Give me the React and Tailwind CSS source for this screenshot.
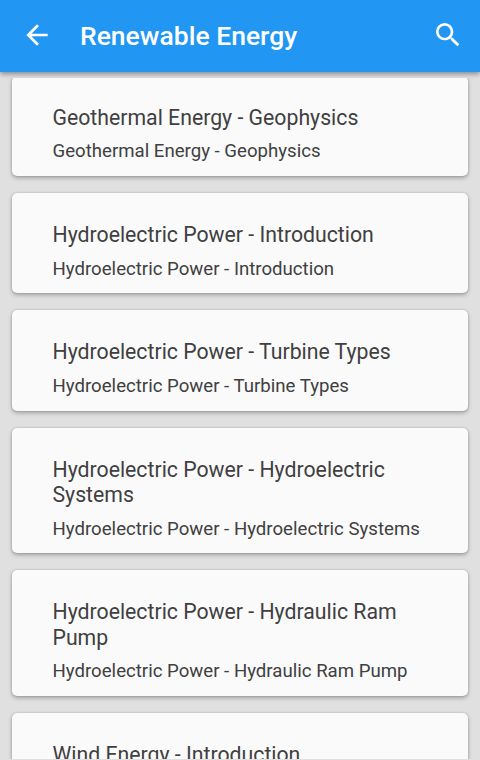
import { MdArrowBack, MdSearch } from "react-icons/md";

const topics = [
  "Geothermal Energy - Geophysics",
  "Hydroelectric Power - Introduction",
  "Hydroelectric Power - Turbine Types",
  "Hydroelectric Power - Hydroelectric Systems",
  "Hydroelectric Power - Hydraulic Ram Pump",
  "Wind Energy - Introduction",
];

const Header = ({ title }) => (
  <header className="flex h-[72px] shrink-0 items-center bg-[#2196f3] pb-0.5 pl-[21px] pr-4 text-white shadow-[0_2px_5px_rgba(0,0,0,0.4)]">
    <button aria-label="Back">
      <MdArrowBack size={32} />
    </button>
    <h1 className="ml-[27px] flex-1 pt-0.5 text-[26.5px] font-medium leading-8">{title}</h1>
    <button aria-label="Search">
      <MdSearch size={32} />
    </button>
  </header>
);

const TopicCard = ({ title }) => (
  <article className="shrink-0 rounded-[5px] bg-[#fafafa] px-[40.3px] pb-[13.6px] pt-[29.2px] shadow-[0_0_2px_rgba(0,0,0,0.22),0_2px_4px_rgba(0,0,0,0.28)]">
    <h2 className="text-[21.25px] leading-[25.2px] text-[#404040]">{title}</h2>
    <p className="mt-[10.3px] text-[18.64px] leading-[22px] text-[#404040]">{title}</p>
  </article>
);

export default function App() {
  return (
    <div className="flex h-[760px] w-[480px] flex-col overflow-hidden bg-[#e0e0e0] pb-px font-['Roboto',sans-serif]">
      <Header title="Renewable Energy" />
      <main className="mt-[6px] min-h-0 flex-1 overflow-hidden px-[12.2px]">
        <div className="-mt-[2.5px] flex flex-col gap-[17.1px]">
          {topics.map((title) => (
            <TopicCard key={title} title={title} />
          ))}
        </div>
      </main>
    </div>
  );
}
